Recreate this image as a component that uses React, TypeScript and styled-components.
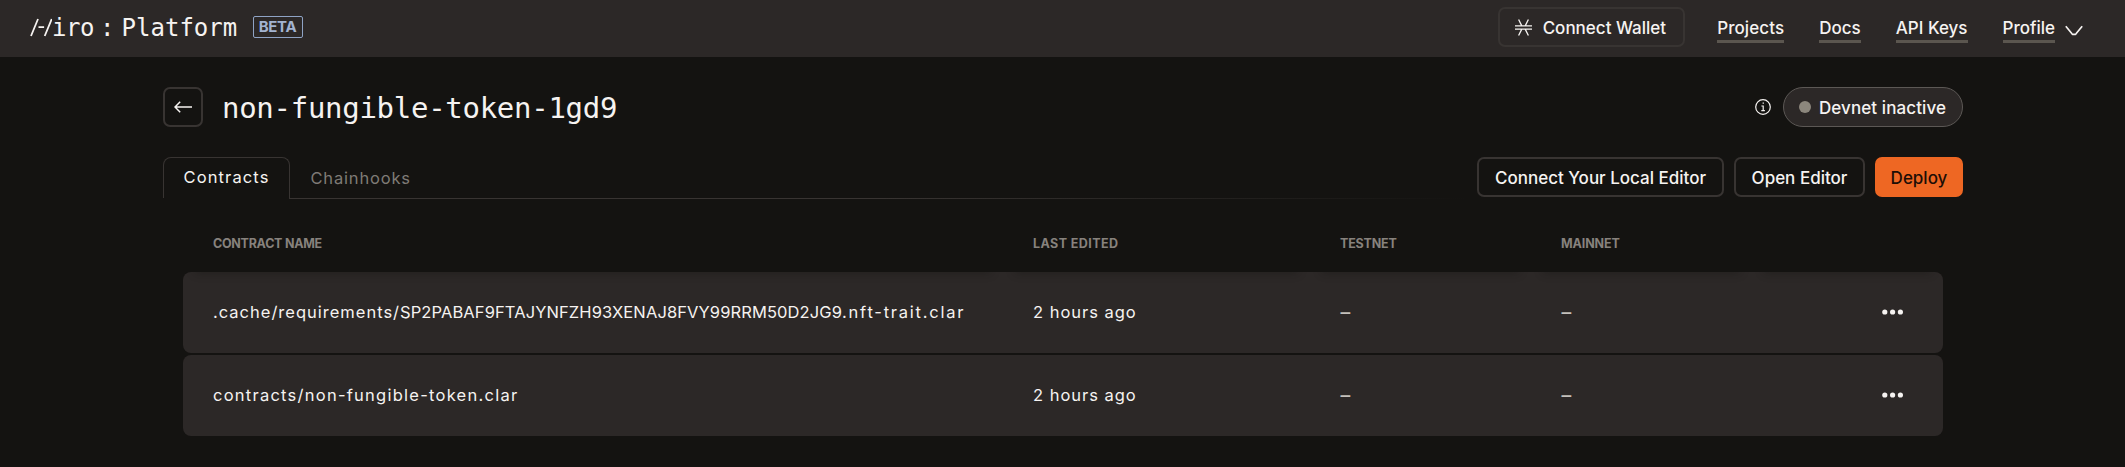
import React from 'react';
import styled, { createGlobalStyle } from 'styled-components';

const sans = `Inter, "Liberation Sans", sans-serif`;
const mono = `"DejaVu Sans Mono", "Liberation Mono", monospace`;
const line = '#383432';
const panel = '#2c2827';
const light = '#f6f3f1';

const GlobalStyle = createGlobalStyle`
  * { box-sizing: border-box; }
  body { margin: 0; background: #141311; color: ${light}; font: 500 17px/20px ${sans}; }
`;

const Page = styled.div`
  height: 467px;
  overflow: hidden;
  background: #141311;
`;

const TopBar = styled.header`
  display: flex;
  justify-content: space-between;
  height: 57px;
  padding: 0 42px 0 30px;
  background: ${panel};
`;

const Brand = styled.div`
  display: flex;
  align-items: center;
  font: 400 24px/27px ${mono};
`;

const BrandMark = styled.svg`
  width: 22px;
  height: 19px;
  margin-top: -2px;
`;

const BrandText = styled.span<{ $width?: number; $tracking?: number }>`
  width: ${({ $width }) => ($width ? `${$width}px` : 'auto')};
  letter-spacing: ${({ $tracking = 0 }) => $tracking}px;
`;

const Beta = styled.span`
  width: 50px;
  height: 22px;
  margin: -3px 0 0 15.5px;
  padding-left: 5px;
  border: 1px solid #8fa3c4;
  border-radius: 2px;
  color: #a3b4d1;
  font: 700 15px/20px ${sans};
  letter-spacing: -0.35px;
`;

const Nav = styled.nav`
  display: flex;
  align-items: flex-start;
  gap: 35px;
`;

const Button = styled.button<{ $primary?: boolean; $width: number }>`
  display: flex;
  align-items: center;
  justify-content: center;
  width: ${({ $width }) => $width}px;
  height: 40px;
  padding: 2px 0 0;
  border: 2px solid ${({ $primary }) => ($primary ? '#ee6723' : line)};
  border-radius: 7px;
  background: ${({ $primary }) => ($primary ? '#ee6723' : 'transparent')};
  color: ${({ $primary }) => ($primary ? '#1d0e06' : light)};
  font: 500 17px/20px ${sans};
  white-space: nowrap;
`;

const WalletButton = styled(Button)`
  justify-content: flex-start;
  margin: 7px -3px 0 0;
  padding: 2px 0 0 14.5px;
  gap: 11px;

  svg { margin-top: -2px; }
`;

const NavLink = styled.a<{ $tracking?: number }>`
  margin-top: 18px;
  padding-bottom: 2px;
  border-bottom: 3px solid #5b564f;
  white-space: nowrap;
  letter-spacing: ${({ $tracking = 0 }) => $tracking}px;
`;

const ProfileMenu = styled.div`
  display: flex;
  gap: 10px;

  svg { margin-top: 25px; }
`;

const Main = styled.main`
  padding: 30px 162px 0 163px;
`;

const TitleRow = styled.div`
  display: flex;
  align-items: center;
  height: 40px;
`;

const BackButton = styled.button`
  display: grid;
  place-items: center;
  width: 40px;
  height: 40px;
  padding: 0;
  border: 2px solid ${line};
  border-radius: 7px;
  background: transparent;
`;

const Title = styled.h1`
  flex: 1;
  margin: 0 0 0 19px;
  padding-top: 2px;
  font: 400 29px/33px ${mono};
  letter-spacing: -0.28px;
`;

const StatusPill = styled.div`
  display: flex;
  align-items: center;
  width: 180px;
  height: 40px;
  margin-left: 12px;
  padding-left: 15px;
  gap: 8px;
  border: 1px solid #5c5855;
  border-radius: 20px;
  background: ${panel};
`;

const StatusDot = styled.i`
  width: 12px;
  height: 12px;
  border-radius: 50%;
  background: #8c877d;
`;

const StatusText = styled.span`
  padding-top: 2px;
  letter-spacing: 0.09px;
`;

const ToolRow = styled.div`
  display: flex;
  height: 42px;
  margin-top: 30px;
`;

const Tab = styled.div<{ $active?: boolean }>`
  height: ${({ $active }) => ($active ? 41 : 42)}px;
  width: ${({ $active }) => ($active ? '127px' : 'auto')};
  padding: ${({ $active }) => ($active ? '9px 0 0 19.5px' : '11px 0 0 20.5px')};
  border: ${({ $active }) => ($active ? `1px solid ${line}` : 'none')};
  border-bottom: 0;
  border-radius: 8px 8px 0 0;
  color: ${({ $active }) => ($active ? light : '#7f7b76')};
  font: 400 16.5px/20px ${sans};
  letter-spacing: ${({ $active }) => ($active ? 1.12 : 0.82)}px;
`;

const TabStrip = styled.div`
  display: flex;
  flex: 1;
  background: linear-gradient(90deg, ${line} 50%, transparent 99%) 126px 100% / calc(100% - 126px) 1px no-repeat;
`;

const Actions = styled.div`
  display: flex;
  gap: 10px;
`;

const Table = styled.section`
  margin: 16px 20px 0;
`;

const Row = styled.div`
  display: grid;
  grid-template-columns: 820px 307px 221px 221px 191px;
  align-items: center;
  height: 81px;
  padding-bottom: 1px;
  border-radius: 8px;
  background: ${panel};
  font: 400 16.5px/20px ${sans};
`;

const HeadRow = styled(Row)`
  position: relative;
  z-index: 1;
  height: 57px;
  padding: 0;
  align-items: stretch;
  background: none;
  color: #87827d;
  font: 700 12.5px/57px ${sans};
`;

const HeadCell = styled.div<{ $tracking?: number }>`
  padding-left: 30px;
  box-shadow: 0 13px 8px -12px rgba(20, 19, 17, 0.4);
  letter-spacing: ${({ $tracking = 0 }) => $tracking}px;
`;

const Body = styled.div`
  display: grid;
  gap: 2px;
`;

const Cell = styled.div`
  padding-left: 30px;
  white-space: nowrap;
`;

const Tracked = styled.span<{ $tracking: number }>`
  letter-spacing: ${({ $tracking }) => $tracking}px;
`;

const Dash = styled(Cell)`
  padding-left: 30.5px;
  color: #c4c0bd;
  font-size: 19.5px;
  font-weight: 500;
`;

const MoreCell = styled.div`
  display: flex;
  padding-left: 130px;
`;

const More = () => (
  <MoreCell>
    <svg width="22" height="6" viewBox="0 0 22 6" fill={light}>
      <circle cx="2.8" cy="3" r="2.6" />
      <circle cx="10.6" cy="3" r="2.6" />
      <circle cx="18.4" cy="3" r="2.6" />
    </svg>
  </MoreCell>
);

const headings = [
  { label: 'CONTRACT NAME', tracking: -0.27 },
  { label: 'LAST EDITED', tracking: 0.42 },
  { label: 'TESTNET', tracking: -0.18 },
  { label: 'MAINNET', tracking: -0.1 },
  { label: '', tracking: 0 },
];

// Directory, principal and file name parts each carry their own tracking.
const contracts: { parts: [string, number][]; edited: string }[] = [
  {
    parts: [
      ['.cache/requirements/', 1.0],
      ['SP2PABAF9FTAJYNFZH93XENAJ8FVY99RRM50D2JG9', 0.1],
      ['.nft-trait.clar', 1.78],
    ],
    edited: '2 hours ago',
  },
  { parts: [['contracts/non-fungible-token.clar', 1.25]], edited: '2 hours ago' },
];

export default function App() {
  return (
    <Page>
      <GlobalStyle />
      <TopBar>
        <Brand>
          <BrandMark viewBox="0 0 22 19" fill="none" stroke={light} strokeWidth="1.8">
            <path d="M1 18 8 1M14.7 18l7-17M8.5 9.2h5.6" />
          </BrandMark>
          <BrandText $width={48} $tracking={-0.5}>iro</BrandText>
          <BrandText $width={21.5}>:</BrandText>
          <BrandText $tracking={0.02}>Platform</BrandText>
          <Beta>BETA</Beta>
        </Brand>
        <Nav>
          <WalletButton $width={187}>
            <svg width="17" height="17" viewBox="0 0 17 17" fill="none" stroke={light} strokeWidth="1.3">
              <path d="M0 6.9h17M0 10.1h17M3.6.5l3.2 6.4M13.4.5l-3.2 6.4M3.6 16.5l3.2-6.4M13.4 16.5l-3.2-6.4" />
            </svg>
            Connect Wallet
          </WalletButton>
          <NavLink $tracking={0.1}>Projects</NavLink>
          <NavLink>Docs</NavLink>
          <NavLink>API Keys</NavLink>
          <ProfileMenu>
            <NavLink>Profile</NavLink>
            <svg width="18" height="11" viewBox="0 0 18 11" fill="none" stroke={light} strokeWidth="1.7">
              <path d="M.8 1.2 7 8.8Q7.6 9.4 8.6 9.4H9.4Q10.4 9.4 11 8.8L17.2 1.2" />
            </svg>
          </ProfileMenu>
        </Nav>
      </TopBar>
      <Main>
        <TitleRow>
          <BackButton aria-label="Back">
            <svg width="18" height="12" viewBox="0 0 18 12" fill="none" stroke={light} strokeWidth="1.5">
              <path d="M1 6h17M6.2.8 1 6l5.2 5.2" />
            </svg>
          </BackButton>
          <Title>non-fungible-token-1gd9</Title>
          <svg width="16" height="16" viewBox="0 0 16 16" fill="none" stroke={light} strokeWidth="1.2">
            <circle cx="8" cy="8" r="7.3" />
            <path d="M6.4 7h1.8v4.4M6.3 11.6h3.6M7.6 4.2h1.3" />
          </svg>
          <StatusPill>
            <StatusDot />
            <StatusText>Devnet inactive</StatusText>
          </StatusPill>
        </TitleRow>
        <ToolRow>
          <TabStrip>
            <Tab $active>Contracts</Tab>
            <Tab>Chainhooks</Tab>
          </TabStrip>
          <Actions>
            <Button $width={247}>Connect Your Local Editor</Button>
            <Button $width={131}>Open Editor</Button>
            <Button $width={88} $primary>Deploy</Button>
          </Actions>
        </ToolRow>
        <Table>
          <HeadRow>
            {headings.map((h, i) => (
              <HeadCell key={i} $tracking={h.tracking}>{h.label}</HeadCell>
            ))}
          </HeadRow>
          <Body>
            {contracts.map((c, i) => (
              <Row key={i}>
                <Cell>
                  {c.parts.map(([text, tracking]) => (
                    <Tracked key={text} $tracking={tracking}>{text}</Tracked>
                  ))}
                </Cell>
                <Cell><Tracked $tracking={0.98}>{c.edited}</Tracked></Cell>
                <Dash>–</Dash>
                <Dash>–</Dash>
                <More />
              </Row>
            ))}
          </Body>
        </Table>
      </Main>
    </Page>
  );
}
